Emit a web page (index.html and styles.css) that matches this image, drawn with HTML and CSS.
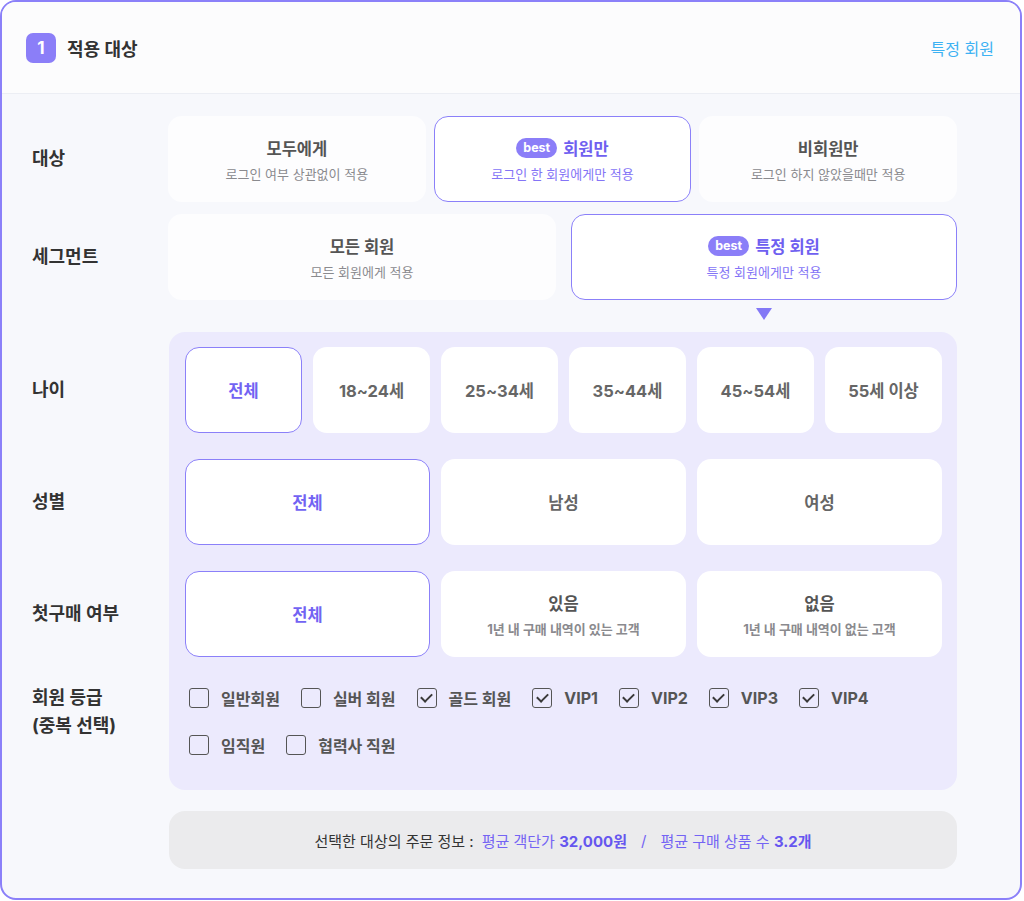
FILE: index.html
```html
<!DOCTYPE html>
<html lang="ko">
<head>
  <meta charset="UTF-8">
  <meta name="viewport" content="width=device-width, initial-scale=1.0">
  <title>적용 대상</title>
  <link rel="stylesheet" href="styles.css">
</head>
<body>

<div class="panel-card">
  <header class="head">
    <div class="head-title">
      <span class="step">1</span>
      <h2>적용 대상</h2>
    </div>
    <a class="head-link" href="#">특정 회원</a>
  </header>

  <div class="content">
    <!-- 대상 -->
    <div class="row">
      <div class="row-label">대상</div>
      <div class="opts opts-3">
        <div class="opt">
          <div class="opt-title">모두에게</div>
          <div class="opt-sub">로그인 여부 상관없이 적용</div>
        </div>
        <div class="opt on">
          <div class="opt-title"><span class="best">best</span>회원만</div>
          <div class="opt-sub">로그인 한 회원에게만 적용</div>
        </div>
        <div class="opt">
          <div class="opt-title">비회원만</div>
          <div class="opt-sub">로그인 하지 않았을때만 적용</div>
        </div>
      </div>
    </div>

    <!-- 세그먼트 -->
    <div class="row">
      <div class="row-label">세그먼트</div>
      <div class="opts opts-2">
        <div class="opt">
          <div class="opt-title">모든 회원</div>
          <div class="opt-sub">모든 회원에게 적용</div>
        </div>
        <div class="opt on">
          <div class="opt-title"><span class="best">best</span>특정 회원</div>
          <div class="opt-sub">특정 회원에게만 적용</div>
        </div>
      </div>
    </div>

    <div class="arrow-row">
      <span class="arrow"></span>
    </div>

    <!-- 특정 회원 조건 -->
    <div class="filters">
      <div class="filters-bg"></div>

      <div class="f-label r1">나이</div>
      <div class="chips chips-6 r1">
        <div class="chip on">전체</div>
        <div class="chip">18~24세</div>
        <div class="chip">25~34세</div>
        <div class="chip">35~44세</div>
        <div class="chip">45~54세</div>
        <div class="chip">55세 이상</div>
      </div>

      <div class="f-label r2">성별</div>
      <div class="chips chips-3 r2">
        <div class="chip on">전체</div>
        <div class="chip">남성</div>
        <div class="chip">여성</div>
      </div>

      <div class="f-label r3">첫구매 여부</div>
      <div class="chips chips-3 r3">
        <div class="chip on">전체</div>
        <div class="chip">
          <div class="opt-title">있음</div>
          <div class="opt-sub">1년 내 구매 내역이 있는 고객</div>
        </div>
        <div class="chip">
          <div class="opt-title">없음</div>
          <div class="opt-sub">1년 내 구매 내역이 없는 고객</div>
        </div>
      </div>

      <div class="f-label r4">회원 등급<br>(중복 선택)</div>
      <div class="checks r4">
        <div class="check-line">
          <label class="check"><span class="box"></span>일반회원</label>
          <label class="check"><span class="box"></span>실버 회원</label>
          <label class="check"><span class="box checked"></span>골드 회원</label>
          <label class="check"><span class="box checked"></span>VIP1</label>
          <label class="check"><span class="box checked"></span>VIP2</label>
          <label class="check"><span class="box checked"></span>VIP3</label>
          <label class="check"><span class="box checked"></span>VIP4</label>
        </div>
        <div class="check-line">
          <label class="check"><span class="box"></span>임직원</label>
          <label class="check"><span class="box"></span>협력사 직원</label>
        </div>
      </div>
    </div>

    <div class="summary">
      선택한 대상의 주문 정보 :
      <span class="hl">평균 객단가 <b>32,000원</b></span>
      <span class="hl slash">/</span>
      <span class="hl">평균 구매 상품 수 <b>3.2개</b></span>
    </div>
  </div>
</div>

</body>
</html>
```

FILE: styles.css
```css
body {
  margin: 0;
  padding: 0;
  font-family: Inter, "Noto Sans CJK KR", sans-serif;
  background-color: #ffffff;
}

.panel-card {
  width: 1022px;
  height: 900px;
  box-sizing: border-box;
  border: 2px solid #8b80f9;
  border-radius: 16px;
  background-color: #f7f8fc;
  overflow: hidden;
}

/* header */
.head {
  height: 91px;
  padding: 0 26px 0 24px;
  display: flex;
  align-items: center;
  justify-content: space-between;
  background-color: #fcfcfd;
  border-bottom: 1px solid #eceef4;
}

.head-title {
  display: flex;
  align-items: center;
  gap: 11px;
}

.head-title h2 {
  margin: 0;
  font-size: 18px;
  font-weight: 700;
  color: #333;
}

.step {
  width: 30px;
  height: 30px;
  border-radius: 7px;
  background-color: #8b7ef8;
  color: #fff;
  font-size: 17px;
  font-weight: 700;
  display: flex;
  align-items: center;
  justify-content: center;
}

.head-link {
  font-size: 16px;
  color: #3db2f3;
  text-decoration: none;
}

/* body */
.content {
  padding: 22px 0 0 30px;
}

.row {
  display: grid;
  grid-template-columns: 136px 789px;
  align-items: center;
  margin-bottom: 12px;
}

.row-label,
.f-label {
  font-size: 18px;
  font-weight: 700;
  color: #333;
  line-height: 28px;
}

.opts {
  display: grid;
  gap: 8px;
}

.opts-3 {
  grid-template-columns: repeat(3, 1fr);
}

.opts-2 {
  grid-template-columns: 388px 386px;
  column-gap: 15px;
}

.opt {
  height: 86px;
  box-sizing: border-box;
  border: 1.5px solid transparent;
  border-radius: 14px;
  background-color: #fdfdfe;
  display: flex;
  flex-direction: column;
  align-items: center;
  justify-content: center;
  gap: 4px;
}

.opt-title {
  display: flex;
  align-items: center;
  gap: 6px;
  font-size: 16.5px;
  font-weight: 700;
  color: #555;
}

.opt-sub {
  font-size: 13px;
  color: #8a8a8e;
}

.opt.on {
  border-color: #8b80f9;
  background-color: #fff;
}

.opt.on .opt-title {
  color: #6f60f0;
}

.opt.on .opt-sub {
  color: #8474f6;
}

.best {
  height: 20px;
  padding: 0 7px;
  border-radius: 10px;
  background-color: #8b7ef8;
  color: #fff;
  font-family: Inter, sans-serif;
  font-size: 12.5px;
  font-weight: 700;
  display: inline-flex;
  align-items: center;
}

.arrow-row {
  display: grid;
  grid-template-columns: 136px 403px 386px;
  height: 12px;
  margin: -4px 0 12px;
}

.arrow {
  grid-column: 3;
  justify-self: center;
  width: 0;
  height: 0;
  border-left: 8px solid transparent;
  border-right: 8px solid transparent;
  border-top: 12px solid #8378f6;
}

/* filter panel */
.filters {
  display: grid;
  grid-template-columns: 137px 788px;
  align-items: center;
  row-gap: 26px;
}

.filters-bg {
  grid-column: 2;
  grid-row: 1 / 5;
  align-self: stretch;
  background-color: #eceafd;
  border-radius: 16px;
}

.f-label {
  grid-column: 1;
}

.r1 { grid-row: 1; }
.r2 { grid-row: 2; }
.r3 { grid-row: 3; }
.r4 { grid-row: 4; }

.f-label.r1 {
  margin-top: 15px;
}

.f-label.r4 {
  align-self: start;
  margin-top: 1px;
}

.chips,
.checks {
  grid-column: 2;
  padding: 0 15px 0 16px;
  display: grid;
  gap: 11px;
}

.chips.r1 {
  margin-top: 15px;
}

.chips-6 {
  grid-template-columns: repeat(6, 1fr);
}

.chips-3 {
  grid-template-columns: repeat(3, 1fr);
}

.chip {
  height: 86px;
  box-sizing: border-box;
  border: 1.5px solid transparent;
  border-radius: 14px;
  background-color: #fff;
  display: flex;
  flex-direction: column;
  align-items: center;
  justify-content: center;
  gap: 4px;
  font-size: 16.5px;
  font-weight: 700;
  color: #666;
}

.chip.on {
  border-color: #8b80f9;
  color: #7263f3;
}

.chip .opt-title {
  color: #555;
}

.checks {
  align-self: start;
  padding: 5px 15px 35px 20px;
  gap: 27px;
}

.check-line {
  display: flex;
  gap: 21px;
}

.check {
  display: flex;
  align-items: center;
  gap: 12px;
  font-size: 16px;
  font-weight: 700;
  color: #555;
  height: 20px;
}

.box {
  width: 20px;
  height: 20px;
  box-sizing: border-box;
  border: 1.5px solid #555;
  border-radius: 3px;
  position: relative;
}

.box.checked::after {
  content: "";
  position: absolute;
  left: 5.5px;
  top: 2px;
  width: 5px;
  height: 9px;
  border-right: 2px solid #3a3a3a;
  border-bottom: 2px solid #3a3a3a;
  transform: rotate(45deg);
}

/* bottom summary */
.summary {
  margin: 21px 0 0 137px;
  width: 788px;
  height: 58px;
  border-radius: 16px;
  background-color: #ebebed;
  display: flex;
  align-items: center;
  justify-content: center;
  gap: 8px;
  font-size: 15px;
  color: #333;
}

.summary .hl {
  color: #7464f4;
}

.summary .hl b {
  font-weight: 700;
  color: #6656ef;
}

.summary .slash {
  margin: 0 6px;
}
```
